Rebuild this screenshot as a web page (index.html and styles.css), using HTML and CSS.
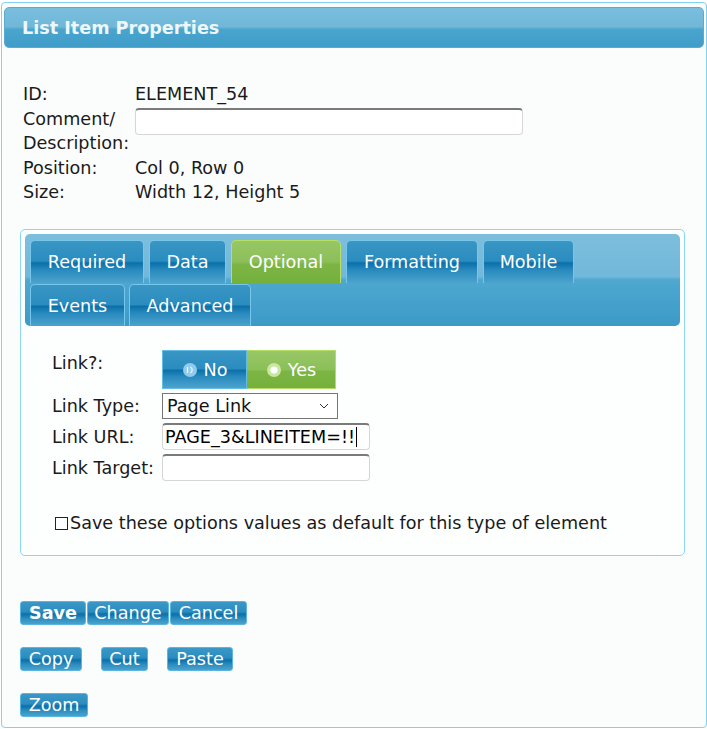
FILE: index.html
```html
<!DOCTYPE html>
<html>
<head>
<meta charset="utf-8">
<link rel="stylesheet" href="styles.css">
</head>
<body>
<div class="panel">
  <div class="header">List Item Properties</div>

  <div class="info">
    <div class="lbl">ID:</div><div class="val">ELEMENT_54</div>
    <div class="lbl">Comment/<br>Description:</div><div class="val"><input class="txt comment" type="text"></div>
    <div class="lbl">Position:</div><div class="val">Col 0, Row 0</div>
    <div class="lbl">Size:</div><div class="val">Width 12, Height 5</div>
  </div>

  <div class="tabbox">
    <div class="tabbar">
      <div class="tabrow">
        <div class="tab w-req">Required</div>
        <div class="tab w-data">Data</div>
        <div class="tab active w-opt">Optional</div>
        <div class="tab w-fmt">Formatting</div>
        <div class="tab w-mob">Mobile</div>
      </div>
      <div class="tabrow row2">
        <div class="tab w-evt">Events</div>
        <div class="tab w-adv">Advanced</div>
      </div>
    </div>

    <div class="form">
      <div class="flbl top">Link?:</div>
      <div class="toggle">
        <div class="opt no">
          <svg width="16" height="16" viewBox="0 0 16 16"><circle cx="8" cy="8" r="7" fill="#8fcbee"/><path d="M5.5 5v6M8.5 5c2.2 1.5 2.2 4.5 0 6" stroke="#eaf7ff" stroke-width="1.3" fill="none"/></svg>
          <span>No</span>
        </div>
        <div class="opt yes">
          <svg width="16" height="16" viewBox="0 0 16 16"><circle cx="8" cy="8" r="7" fill="#c9e79f"/><circle cx="8" cy="8" r="3.6" fill="#ffffff"/></svg>
          <span>Yes</span>
        </div>
      </div>

      <div class="flbl">Link Type:</div>
      <div class="sel"><span>Page Link</span><svg width="10" height="6" viewBox="0 0 10 6"><path d="M1 1l4 4 4-4" stroke="#333" stroke-width="1" fill="none"/></svg></div>

      <div class="flbl">Link URL:</div>
      <div class="txt url"><span>PAGE_3&amp;LINEITEM=!!</span><span class="caret"></span></div>

      <div class="flbl">Link Target:</div>
      <div class="txt target"></div>
    </div>

    <div class="check"><span class="box"></span>Save these options values as default for this type of element</div>
  </div>

  <div class="btnrow">
    <div class="btn b-save bold">Save</div><div class="btn b-chg">Change</div><div class="btn b-cnl">Cancel</div>
  </div>
  <div class="btnrow spaced">
    <div class="btn b-copy">Copy</div><div class="btn b-cut">Cut</div><div class="btn b-paste">Paste</div>
  </div>
  <div class="btnrow">
    <div class="btn b-zoom">Zoom</div>
  </div>
</div>
</body>
</html>
```

FILE: styles.css
```css
html, body {
  margin: 0;
  padding: 0;
  background: #ffffff;
}
body {
  font-family: "DejaVu Sans", Verdana, sans-serif;
  font-size: 17.6px;
  color: #1a1a1a;
}
.panel {
  margin: 2px 0 0 1px;
  height: 726px;
  box-sizing: border-box;
  border: 1px solid #7fd2f3;
  border-radius: 4px;
  background: #fbfdfd;
  padding: 4px 2px 0 2px;
}
.header {
  height: 41px;
  box-sizing: border-box;
  border-radius: 5px;
  border: 1px solid #5ea9d2;
  background: linear-gradient(#7abedd 0%, #70b7d8 48%, #4aa5ce 55%, #3f9dc9 100%);
  color: #eef7fb;
  font-weight: bold;
  font-size: 17.6px;
  line-height: 37px;
  padding: 2px 0 0 17px;
}
.info {
  display: grid;
  grid-template-columns: 112px 1fr;
  line-height: 24.5px;
  margin: 34px 0 0 19px;
}
.info .val { color: #1a1a1a; }
.txt {
  box-sizing: border-box;
  border: 1px solid #d6d6d6;
  border-top: 2px solid #7a7a7a;
  border-radius: 4px;
  background: #ffffff;
}
.comment {
  display: block;
  width: 388px;
  height: 27px;
  margin-top: 1.5px;
  font: inherit;
}
.tabbox {
  margin: 24.5px 19px 0 16px;
  height: 327px;
  box-sizing: border-box;
  border: 1px solid #8dd6f3;
  border-radius: 5px;
  background: #fdfefe;
  padding: 4px;
}
.tabbar {
  height: 92px;
  box-sizing: border-box;
  border-radius: 5px;
  padding: 6px 0 0 5px;
  background: linear-gradient(#7dbedc 0%, #72b8da 46%, #4ea8d0 50%, #3c9ac7 100%);
}
.tabrow {
  display: flex;
  gap: 5px;
  height: 43px;
}
.tabrow.row2 {
  margin-top: 1px;
  gap: 4px;
  height: 42px;
}
.tab {
  box-sizing: border-box;
  border: 1px solid #78c6ea;
  border-bottom: 0;
  border-radius: 5px 5px 0 0;
  color: #ffffff;
  font-size: 17.6px;
  text-align: center;
  line-height: 39px;
  padding-top: 2px;
  background: linear-gradient(#3996c4 0%, #2a8cbf 48%, #0b70aa 52%, #2a8bbe 70%, #4ca3cd 100%);
}
.tab.active {
  border-color: #b8de63;
  background: linear-gradient(#98c766 0%, #8bbf58 50%, #7db545 55%, #75b03b 100%);
}
.w-req { width: 114px; }
.w-data { width: 77px; }
.w-opt { width: 110px; }
.w-fmt { width: 132px; }
.w-mob { width: 91px; }
.w-evt { width: 95px; }
.w-adv { width: 122px; }

.form {
  display: grid;
  grid-template-columns: 110px auto;
  justify-content: start;
  margin: 24px 0 0 27px;
  row-gap: 4px;
  align-items: center;
}
.flbl { line-height: 24px; }
.flbl.top { align-self: start; padding-top: 1px; }
.toggle {
  display: flex;
  height: 39px;
}
.opt {
  box-sizing: border-box;
  display: flex;
  align-items: center;
  justify-content: center;
  gap: 6px;
  color: #ffffff;
  font-size: 17.6px;
}
.opt.no {
  width: 85px;
  border: 1px solid #63bde6;
  background: linear-gradient(#3996c4 0%, #2a8cbf 48%, #0b70aa 52%, #2a8bbe 70%, #4ca3cd 100%);
}
.opt.yes {
  width: 89px;
  border: 1px solid #b4dc62;
  border-left: 0;
  background: linear-gradient(#98c766 0%, #8bbf58 50%, #7db545 55%, #75b03b 100%);
}
.sel {
  box-sizing: border-box;
  width: 176px;
  height: 26px;
  border: 1px solid #767676;
  background: #ffffff;
  display: flex;
  align-items: center;
  justify-content: space-between;
  padding: 0 8px 0 4px;
  color: #111;
}
.url, .target {
  width: 208px;
  height: 27px;
}
.url {
  display: flex;
  align-items: center;
  padding-left: 2px;
  color: #000;
  font-size: 17.6px;
  overflow: hidden;
  white-space: nowrap;
}
.caret {
  display: inline-block;
  width: 1px;
  height: 20px;
  background: #000;
  margin-left: 1px;
}
.check {
  margin: 30px 0 0 30px;
  display: flex;
  align-items: center;
  line-height: 24px;
}
.check .box {
  display: inline-block;
  width: 11px;
  height: 11px;
  border: 1px solid #222;
  margin-right: 2px;
}
.btnrow {
  display: flex;
  gap: 1px;
  margin: 45px 0 0 16px;
}
.btnrow + .btnrow { margin-top: 22px; }
.btnrow.spaced { gap: 19px; }
.btn {
  box-sizing: border-box;
  height: 24px;
  border: 1px solid #5ab6e1;
  border-radius: 3px;
  color: #ffffff;
  text-align: center;
  line-height: 22px;
  font-size: 17.6px;
  background: linear-gradient(#3b98c6 0%, #2a8cbf 45%, #0b70aa 55%, #2c8dbf 75%, #4aa2cc 100%);
}
.btn.bold { font-weight: bold; }
.b-save { width: 66px; }
.b-chg { width: 82px; }
.b-cnl { width: 77px; }
.b-copy { width: 62px; }
.b-cut { width: 47px; }
.b-paste { width: 66px; }
.b-zoom { width: 68px; }
```
